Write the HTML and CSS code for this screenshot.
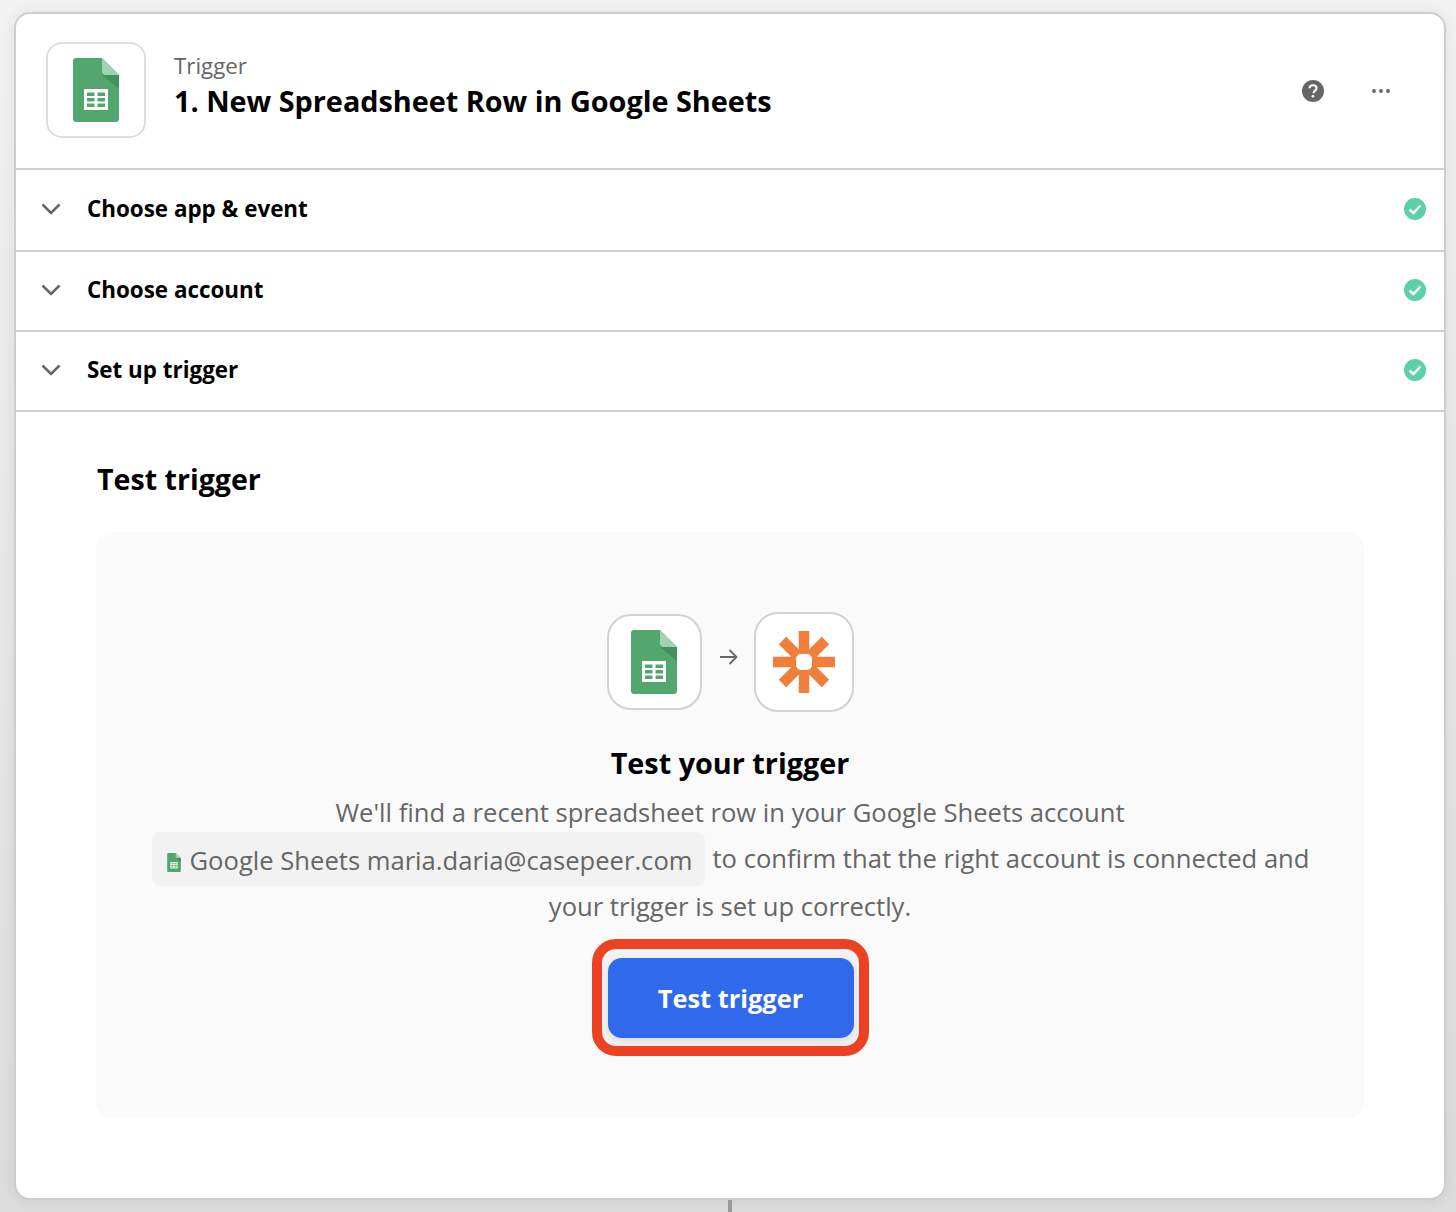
FILE: index.html
```html
<!DOCTYPE html>
<html lang="en">
<head>
<meta charset="utf-8">
<title>Test trigger</title>
<link rel="stylesheet" href="styles.css">
</head>
<body>
<svg class="defs" width="0" height="0" aria-hidden="true">
  <symbol id="sheets" viewBox="0 0 46 64">
    <path d="M3 0H29L46 17V61a3 3 0 0 1-3 3H3a3 3 0 0 1-3-3V3a3 3 0 0 1 3-3Z" fill="#54a66f"/>
    <path d="M29 17 46 31V17Z" fill="#45905f"/>
    <path d="M29 0 46 17H33a4 4 0 0 1-4-4Z" fill="#a1d3b3"/>
    <path d="M11 31H35V52H11Z" fill="#fff"/>
    <path d="M14 34.500H21.500V38H14ZM24.500 34.500H32V38H24.500ZM14 40H21.500V43.500H14ZM24.500 40H32V43.500H24.500ZM14 45.500H21.500V49H14ZM24.500 45.500H32V49H24.500Z" fill="#54a66f"/>
  </symbol>
</svg>
<main class="page">
  <section class="card">
    <header class="head">
      <div class="tile tile-head"><svg class="sheet-lg"><use href="#sheets"/></svg></div>
      <div class="titles">
        <div class="eyebrow">Trigger</div>
        <h1 class="title">1. New Spreadsheet Row in Google Sheets</h1>
      </div>
      <div class="head-actions">
        <svg class="help" viewBox="0 0 22 22"><circle cx="11" cy="11" r="11" fill="#666"/><path d="M7.500 8.300C7.600 6.300 9 5.200 11 5.200c2.100 0 3.500 1.200 3.500 3 0 1.300-.7 2-1.700 2.700-.9.600-1.200 1-1.200 2v.4" fill="none" stroke="#fff" stroke-width="2"/><circle cx="10.900" cy="16.300" r="1.300" fill="#fff"/></svg>
        <svg class="more" viewBox="0 0 18 4"><circle cx="2" cy="2" r="1.900" fill="#666"/><circle cx="9" cy="2" r="1.900" fill="#666"/><circle cx="16" cy="2" r="1.900" fill="#666"/></svg>
      </div>
    </header>
    <div class="row">
      <svg class="chev" viewBox="0 0 20 12"><path d="M1.500 1.500 10 10l8.500-8.500" fill="none" stroke="#666" stroke-width="2.600"/></svg>
      <span class="row-label">Choose app &amp; event</span>
      <svg class="ok" viewBox="0 0 22 22"><circle cx="11" cy="11" r="11" fill="#5ccfab"/><path d="M5.500 11.500 9.500 15 16.500 7.500" fill="none" stroke="#fff" stroke-width="2.400"/></svg>
    </div>
    <div class="row">
      <svg class="chev" viewBox="0 0 20 12"><path d="M1.500 1.500 10 10l8.500-8.500" fill="none" stroke="#666" stroke-width="2.600"/></svg>
      <span class="row-label">Choose account</span>
      <svg class="ok" viewBox="0 0 22 22"><circle cx="11" cy="11" r="11" fill="#5ccfab"/><path d="M5.500 11.500 9.500 15 16.500 7.500" fill="none" stroke="#fff" stroke-width="2.400"/></svg>
    </div>
    <div class="row">
      <svg class="chev" viewBox="0 0 20 12"><path d="M1.500 1.500 10 10l8.500-8.500" fill="none" stroke="#666" stroke-width="2.600"/></svg>
      <span class="row-label">Set up trigger</span>
      <svg class="ok" viewBox="0 0 22 22"><circle cx="11" cy="11" r="11" fill="#5ccfab"/><path d="M5.500 11.500 9.500 15 16.500 7.500" fill="none" stroke="#fff" stroke-width="2.400"/></svg>
    </div>
    <div class="body">
      <h2 class="section-title">Test trigger</h2>
      <div class="panel">
        <div class="flow">
          <div class="tile tile-a"><svg class="sheet-lg"><use href="#sheets"/></svg></div>
          <svg class="arrow" viewBox="0 0 18 16"><path d="M0 8H16.500M9.500 1 16.500 8l-7 7" fill="none" stroke="#666" stroke-width="1.800"/></svg>
          <div class="tile tile-b">
            <svg class="zap" viewBox="0 0 62 62">
              <path d="M31 0V62M0 31H62M9.500 9.500 52.500 52.500M52.500 9.500 9.500 52.500" fill="none" stroke="#f07f3c" stroke-width="10.500"/>
              <rect x="23" y="23" width="16" height="16" rx="5" fill="#fff"/>
            </svg>
          </div>
        </div>
        <h3 class="panel-title">Test your trigger</h3>
        <p class="copy copy-1">We'll find a recent spreadsheet row in your Google Sheets account</p>
        <p class="copy copy-2"><span class="chip"><svg class="sheet-sm"><use href="#sheets"/></svg>Google Sheets maria.daria@casepeer.com</span><span class="after-chip">to confirm that the right account is connected and</span></p>
        <p class="copy copy-3">your trigger is set up correctly.</p>
        <div class="highlight"><button class="cta" type="button">Test trigger</button></div>
      </div>
    </div>
  </section>
  <div class="connector"></div>
</main>
</body>
</html>
```

FILE: styles.css
```css
* { box-sizing: border-box; }
html, body { margin: 0; height: 100%; }
body {
  background: linear-gradient(#f2f2f2, #dcdcdc);
  font-family: "Open Sans", "Liberation Sans", sans-serif;
  overflow: hidden;
}
.defs { position: absolute; }
.page { padding: 12px 10px 0 14px; }
.card {
  height: 1188px;
  background: #fff;
  border: 2px solid #cdcdcd;
  border-radius: 16px;
  box-shadow: 0 0 16px rgba(0, 0, 0, .07);
  display: flex;
  flex-direction: column;
}
.head {
  height: 156px;
  flex: none;
  display: flex;
  align-items: center;
  padding: 0 0 0 30px;
  border-bottom: 2px solid #cfcfcf;
}
.tile {
  background: #fff;
  border: 2px solid #d2d2d2;
  border-radius: 16px;
  display: flex;
  align-items: center;
  justify-content: center;
  flex: none;
}
.tile-head { width: 100px; height: 96px; margin-top: -3px; border-color: #dedede; }
.sheet-lg { width: 46px; height: 64px; }
.titles { margin-left: 28px; margin-top: -12px; }
.eyebrow { font-size: 22.3px; line-height: 29px; margin-top: 1px; color: #666; }
.title { margin: 2px 0 0; font-size: 28.8px; line-height: 38px; font-weight: 700; color: #000; }
.head-actions { margin-left: auto; display: flex; align-items: center; padding-right: 54px; gap: 48px; }
.help { width: 22px; height: 22px; }
.more { width: 18px; height: 4px; }
.row {
  height: 80px;
  flex: none;
  display: flex;
  align-items: center;
  padding: 0 18px 0 25px;
  border-bottom: 2px solid #cfcfcf;
}
.row:nth-of-type(1) { height: 82px; }
.chev { width: 20px; height: 12px; flex: none; margin-top: -2px; }
.row-label { margin-left: 26px; margin-top: -3px; font-size: 22.4px; font-weight: 700; color: #000; }
.ok { width: 22px; height: 22px; margin-left: auto; margin-top: -2px; }
.body { padding: 47px 80px 0 80px; }
.section-title { margin: 0 0 0 1px; font-size: 28.6px; line-height: 40px; font-weight: 700; color: #000; }
.panel {
  margin-top: 33px;
  height: 586px;
  background: #fafafa;
  border-radius: 16px;
  display: flex;
  flex-direction: column;
  align-items: center;
  padding-top: 80px;
}
.flow { display: flex; align-items: center; height: 99px; }
.tile-a { width: 95px; height: 96px; border-radius: 24px; }
.tile-b { width: 100px; height: 100px; border-radius: 24px; }
.arrow { width: 18px; height: 16px; margin: -10px 16px 0 18px; }
.zap { width: 62px; height: 62px; }
.panel-title { margin: 31px 0 0; font-size: 28.8px; line-height: 42px; font-weight: 700; color: #000; }
.copy { margin: 0; font-size: 25.6px; color: #666; white-space: nowrap; }
.copy-1 { line-height: 36px; margin-top: 11px; }
.copy-2 { line-height: 54px; height: 54px; margin: 1px 0 0 1px; display: flex; align-items: center; }
.copy-3 { line-height: 40px; margin-top: 1px; }
.chip {
  display: inline-flex;
  align-items: center;
  height: 54px;
  background: #f2f2f2;
  border-radius: 8px;
  padding: 3px 13px 0 14px;
}
.sheet-sm { width: 16px; height: 19px; margin: 4px 8px 0 0; }
.after-chip { margin-left: 7px; }
.highlight {
  margin-top: 12px;
  padding: 9px 5px 8px 6px;
  background: #f3f3f3;
  border: 10px solid #ed4124;
  border-radius: 24px;
}
.cta {
  display: block;
  width: 246px;
  height: 80px;
  border: 0;
  border-radius: 14px;
  background: #3169ec;
  color: #fff;
  font: 700 25.4px "Open Sans", "Liberation Sans", sans-serif;
  box-shadow: 0 3px 8px rgba(0, 0, 0, .1);
}
.connector { width: 4px; height: 13px; margin-left: 714px; background: #999; }
```
